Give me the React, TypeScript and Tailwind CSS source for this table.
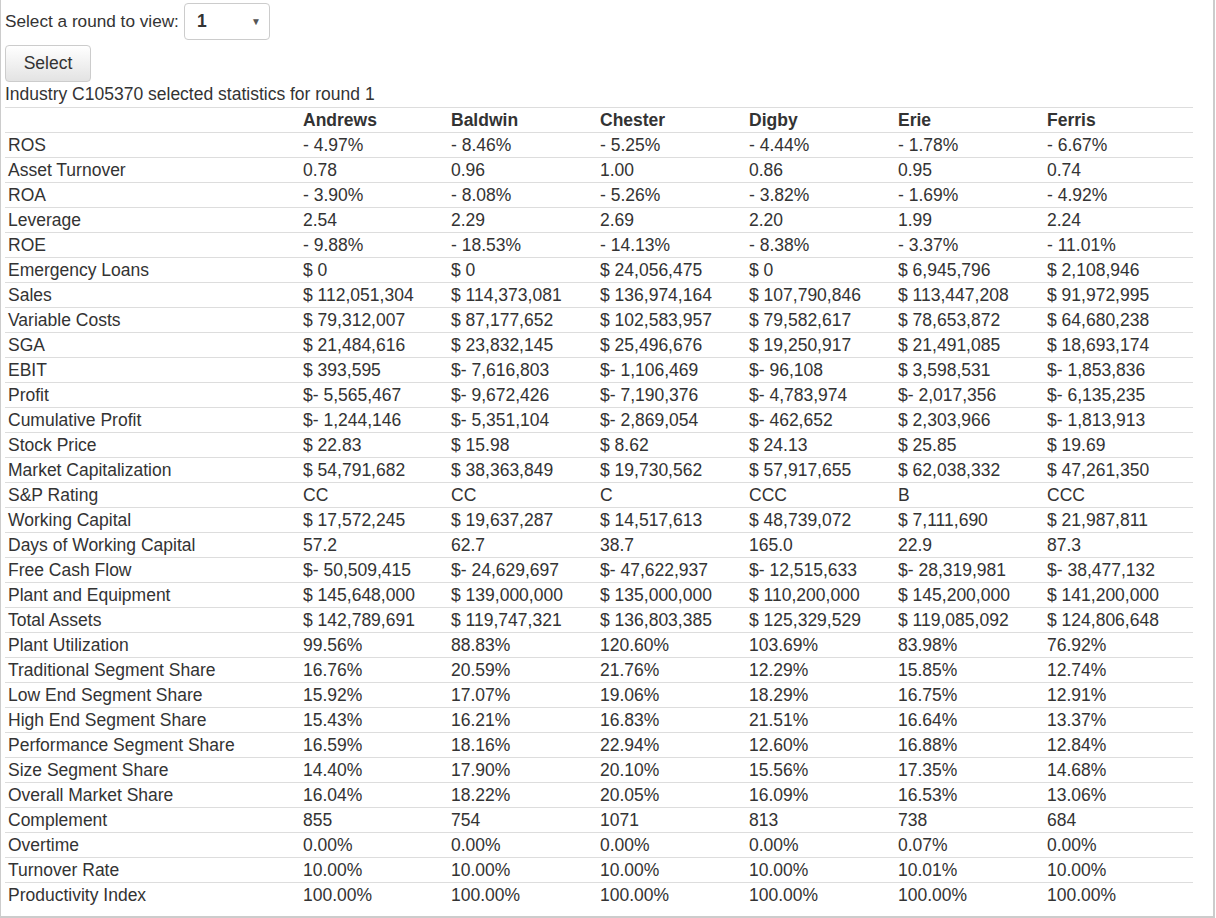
import React from "react";

const companies = ["Andrews", "Baldwin", "Chester", "Digby", "Erie", "Ferris"];

const rows: [string, string[]][] = [
  ["ROS", ["- 4.97%", "- 8.46%", "- 5.25%", "- 4.44%", "- 1.78%", "- 6.67%"]],
  ["Asset Turnover", ["0.78", "0.96", "1.00", "0.86", "0.95", "0.74"]],
  ["ROA", ["- 3.90%", "- 8.08%", "- 5.26%", "- 3.82%", "- 1.69%", "- 4.92%"]],
  ["Leverage", ["2.54", "2.29", "2.69", "2.20", "1.99", "2.24"]],
  ["ROE", ["- 9.88%", "- 18.53%", "- 14.13%", "- 8.38%", "- 3.37%", "- 11.01%"]],
  ["Emergency Loans", ["$ 0", "$ 0", "$ 24,056,475", "$ 0", "$ 6,945,796", "$ 2,108,946"]],
  ["Sales", ["$ 112,051,304", "$ 114,373,081", "$ 136,974,164", "$ 107,790,846", "$ 113,447,208", "$ 91,972,995"]],
  ["Variable Costs", ["$ 79,312,007", "$ 87,177,652", "$ 102,583,957", "$ 79,582,617", "$ 78,653,872", "$ 64,680,238"]],
  ["SGA", ["$ 21,484,616", "$ 23,832,145", "$ 25,496,676", "$ 19,250,917", "$ 21,491,085", "$ 18,693,174"]],
  ["EBIT", ["$ 393,595", "$- 7,616,803", "$- 1,106,469", "$- 96,108", "$ 3,598,531", "$- 1,853,836"]],
  ["Profit", ["$- 5,565,467", "$- 9,672,426", "$- 7,190,376", "$- 4,783,974", "$- 2,017,356", "$- 6,135,235"]],
  ["Cumulative Profit", ["$- 1,244,146", "$- 5,351,104", "$- 2,869,054", "$- 462,652", "$ 2,303,966", "$- 1,813,913"]],
  ["Stock Price", ["$ 22.83", "$ 15.98", "$ 8.62", "$ 24.13", "$ 25.85", "$ 19.69"]],
  ["Market Capitalization", ["$ 54,791,682", "$ 38,363,849", "$ 19,730,562", "$ 57,917,655", "$ 62,038,332", "$ 47,261,350"]],
  ["S&P Rating", ["CC", "CC", "C", "CCC", "B", "CCC"]],
  ["Working Capital", ["$ 17,572,245", "$ 19,637,287", "$ 14,517,613", "$ 48,739,072", "$ 7,111,690", "$ 21,987,811"]],
  ["Days of Working Capital", ["57.2", "62.7", "38.7", "165.0", "22.9", "87.3"]],
  ["Free Cash Flow", ["$- 50,509,415", "$- 24,629,697", "$- 47,622,937", "$- 12,515,633", "$- 28,319,981", "$- 38,477,132"]],
  ["Plant and Equipment", ["$ 145,648,000", "$ 139,000,000", "$ 135,000,000", "$ 110,200,000", "$ 145,200,000", "$ 141,200,000"]],
  ["Total Assets", ["$ 142,789,691", "$ 119,747,321", "$ 136,803,385", "$ 125,329,529", "$ 119,085,092", "$ 124,806,648"]],
  ["Plant Utilization", ["99.56%", "88.83%", "120.60%", "103.69%", "83.98%", "76.92%"]],
  ["Traditional Segment Share", ["16.76%", "20.59%", "21.76%", "12.29%", "15.85%", "12.74%"]],
  ["Low End Segment Share", ["15.92%", "17.07%", "19.06%", "18.29%", "16.75%", "12.91%"]],
  ["High End Segment Share", ["15.43%", "16.21%", "16.83%", "21.51%", "16.64%", "13.37%"]],
  ["Performance Segment Share", ["16.59%", "18.16%", "22.94%", "12.60%", "16.88%", "12.84%"]],
  ["Size Segment Share", ["14.40%", "17.90%", "20.10%", "15.56%", "17.35%", "14.68%"]],
  ["Overall Market Share", ["16.04%", "18.22%", "20.05%", "16.09%", "16.53%", "13.06%"]],
  ["Complement", ["855", "754", "1071", "813", "738", "684"]],
  ["Overtime", ["0.00%", "0.00%", "0.00%", "0.00%", "0.07%", "0.00%"]],
  ["Turnover Rate", ["10.00%", "10.00%", "10.00%", "10.00%", "10.01%", "10.00%"]],
  ["Productivity Index", ["100.00%", "100.00%", "100.00%", "100.00%", "100.00%", "100.00%"]],
];

export default function App() {
  return (
    <div
      className="w-[1215px] h-[918px] bg-white border-l border-r-2 border-b-2 border-[#cccccc] pl-[4px] text-[#333333] text-[17.5px] overflow-hidden"
      style={{ fontFamily: '"Liberation Sans", Arial, Helvetica, sans-serif' }}
    >
      <div className="flex items-center h-[40px] pt-[3px]">
        <span className="leading-[24px] pb-[2px] text-[17.2px]">Select a round to view:</span>
        <div className="ml-[5px] w-[86px] h-[37px] border border-[#cccccc] rounded-[4px] flex items-center justify-between pl-[12px] pr-[8px]">
          <span className="font-bold">1</span>
          <span className="text-[10px] text-[#555555]">▼</span>
        </div>
      </div>
      <div className="mt-[5px] w-[86px] h-[37px] border border-[#cccccc] rounded-[4px] bg-gradient-to-b from-white to-[#e3e3e3] flex items-center justify-center pb-[1px]">
        Select
      </div>
      <div className="leading-[23px] h-[25px] pt-[1px]">Industry C105370 selected statistics for round 1</div>
      <table className="w-[1188px] table-fixed border-collapse">
        <colgroup>
          <col className="w-[295px]" />
          <col className="w-[148px]" />
          <col className="w-[149px]" />
          <col className="w-[149px]" />
          <col className="w-[149px]" />
          <col className="w-[149px]" />
          <col className="w-[149px]" />
        </colgroup>
        <thead>
          <tr className="border-t border-[#dddddd] h-[25px]">
            <th className="px-[3px] pt-[1px] pb-0 leading-[23px]"></th>
            {companies.map((c) => (
              <th key={c} className="text-left font-bold px-[3px] pt-[1px] pb-0 leading-[23px]">
                {c}
              </th>
            ))}
          </tr>
        </thead>
        <tbody>
          {rows.map(([label, vals]) => (
            <tr key={label} className="border-t border-[#dddddd] h-[25px]">
              <td className="px-[3px] pt-[1px] pb-0 leading-[23px] whitespace-nowrap">{label}</td>
              {vals.map((v, i) => (
                <td key={i} className="px-[3px] pt-[1px] pb-0 leading-[23px] whitespace-nowrap">
                  {v}
                </td>
              ))}
            </tr>
          ))}
        </tbody>
      </table>
    </div>
  );
}
